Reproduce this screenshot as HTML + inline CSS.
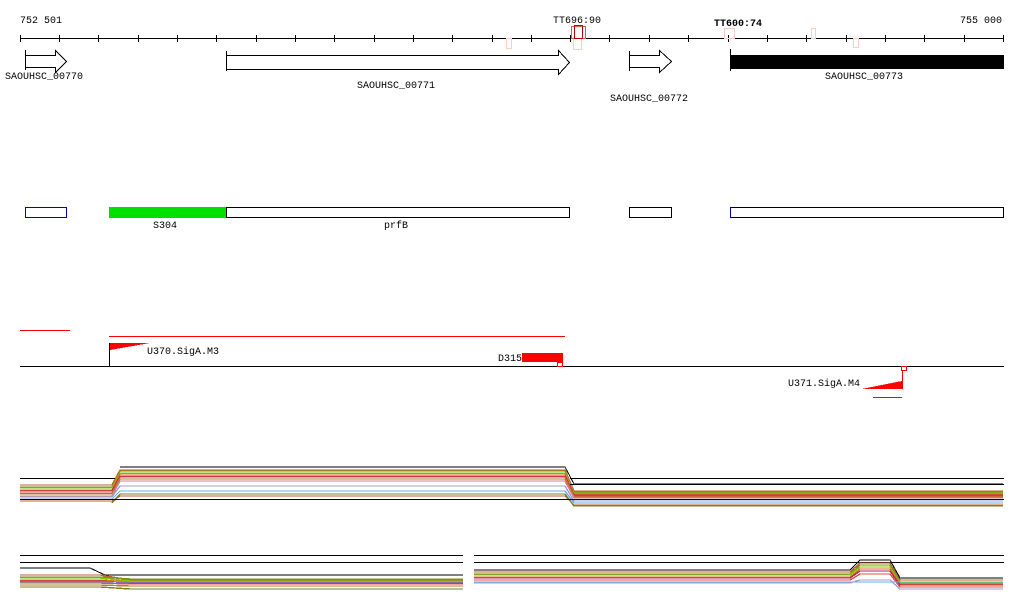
<!DOCTYPE html><html><head><style>body{margin:0;background:#fff}svg{display:block}text{font-family:"Liberation Mono",monospace;font-size:10px}</style></head><body>
<svg width="1024" height="611" xmlns="http://www.w3.org/2000/svg" shape-rendering="crispEdges">
<rect width="1024" height="611" fill="#fff"/>
<text x="20" y="23">752 501</text><text x="960" y="23">755 000</text>
<text x="553" y="23">TT696:90</text><text x="714" y="26" font-weight="bold">TT600:74</text>
<line x1="20" y1="38.5" x2="1003" y2="38.5" stroke="#000"/>
<g stroke="#000">
<path d="M20.5 35v7M59.5 35v7M98.5 35v7M138.5 35v7M177.5 35v7M216.5 35v7M256.5 35v7M295.5 35v7M334.5 35v7M374.5 35v7M413.5 35v7M452.5 35v7M492.5 35v7M531.5 35v7M570.5 35v7M609.5 35v7M649.5 35v7M688.5 35v7M728.5 35v7M767.5 35v7M806.5 35v7M846.5 35v7M885.5 35v7M924.5 35v7M964.5 35v7M1003.5 35v7"/></g>
<g fill="none" stroke="#f8d0c0"><rect x="506.5" y="38.5" width="5" height="10"/><rect x="573.5" y="38.5" width="8" height="11"/><rect x="724.5" y="28.5" width="10" height="10"/><rect x="811.5" y="28.5" width="4" height="10"/><rect x="853.5" y="38.5" width="5" height="9"/></g>
<rect x="571.5" y="26.5" width="14" height="12" fill="none" stroke="#e06040"/><rect x="574.5" y="25.5" width="8" height="13" fill="none" stroke="#c00000"/>
<g fill="#fff" stroke="#000">
<path d="M25.5 55.5h30v-5l11 11-11 11v-5h-30z"/>
<path d="M25.5 50v20M226.5 51v20M629.5 51v20M730.5 49v22"/>
<path d="M226.5 55.5h332v-5l11 12-11 12v-5h-332z"/>
<path d="M629.5 55.5h30v-5l12 11-12 11v-5h-30z"/>
</g>
<rect x="730" y="55" width="274" height="14" fill="#000"/>
<text x="5" y="79">SAOUHSC_00770</text><text x="357" y="88">SAOUHSC_00771</text><text x="610" y="101">SAOUHSC_00772</text><text x="825" y="79">SAOUHSC_00773</text>
<rect x="25.5" y="207.5" width="41" height="10" fill="none" stroke="#0000c0"/>
<rect x="109" y="207" width="117" height="11" fill="#00e000"/>
<rect x="226.5" y="207.5" width="343" height="10" fill="none" stroke="#000"/>
<rect x="629.5" y="207.5" width="42" height="10" fill="none" stroke="#000"/>
<rect x="730.5" y="207.5" width="273" height="10" fill="none" stroke="#000"/><line x1="730.5" y1="207" x2="730.5" y2="218" stroke="#0000c0"/>
<text x="153" y="228">S304</text><text x="384" y="228">prfB</text>
<line x1="20" y1="330.5" x2="70" y2="330.5" stroke="red"/>
<line x1="109" y1="336.5" x2="565" y2="336.5" stroke="red"/>
<line x1="20" y1="366.5" x2="1004" y2="366.5" stroke="#000"/>
<line x1="109.5" y1="343" x2="109.5" y2="366" stroke="#000"/>
<path d="M110 343h40l-40 7z" fill="red"/>
<text x="147" y="354">U370.SigA.M3</text>
<text x="498" y="361">D315</text><rect x="522" y="353" width="41" height="9" fill="red"/>
<rect x="557.5" y="362.5" width="5" height="4" fill="none" stroke="red"/>
<path d="M862 389l40-8v8z" fill="red"/><line x1="902.5" y1="371" x2="902.5" y2="389" stroke="red"/><rect x="901.5" y="366.5" width="5" height="4" fill="none" stroke="red"/>
<line x1="873" y1="397.5" x2="902" y2="397.5" stroke="red"/>
<text x="788" y="386">U371.SigA.M4</text>
<g fill="none" stroke-width="1.4">
<g id="tb">
<path stroke="#c06030" d="M20 485H112L120 470H565L574 491H1003"/>
<path stroke="#8a8a20" d="M20 487H112L120 471H565L574 492H1003"/>
<path stroke="#70d000" d="M20 488H112L120 473H565L574 493H1003"/>
<path stroke="#e07020" d="M20 490H112L120 474H565L574 494H1003"/>
<path stroke="#c02060" d="M20 491H112L120 476H565L574 495H1003"/>
<path stroke="#e05040" d="M20 493H112L120 477H565L574 496H1003"/>
<path stroke="#b08030" d="M20 494H112L120 479H565L574 497H1003"/>
<path stroke="#d08090" d="M20 496H112L120 481H565L574 498H1003"/>
<path stroke="#a0a0d0" d="M20 497H112L120 486H565L574 501H1003"/>
<path stroke="#60b0f0" d="M20 499H112L120 491H565L574 503H1003"/>
<path stroke="#c06030" d="M20 501H112L120 496H565L574 505H1003"/>
<path stroke="#808020" d="M112 503L120 494H565L574 506H1003"/>
</g>
<path stroke="#000" d="M120 467H565L574 484H1003" stroke-width="1"/>
</g>
<g stroke="#000"><line x1="20" y1="478.5" x2="115" y2="478.5"/><line x1="570" y1="478.5" x2="1004" y2="478.5"/><line x1="570" y1="484.5" x2="1004" y2="484.5"/><line x1="20" y1="499.5" x2="1004" y2="499.5"/>
<line x1="20" y1="555.5" x2="463" y2="555.5"/><line x1="20" y1="562.5" x2="463" y2="562.5"/><line x1="474" y1="555.5" x2="1004" y2="555.5"/><line x1="474" y1="562.5" x2="1004" y2="562.5"/></g>
<g fill="none" stroke-width="1.4">
<path stroke="#000" stroke-width="1" d="M20 568H90L105 575H463"/>
<path stroke="#c06030" d="M20 575H100L130 580H463"/>
<path stroke="#8a8a20" d="M20 577H100L130 579H463"/>
<path stroke="#70d000" d="M20 578H100L130 581H463"/>
<path stroke="#e07020" d="M20 580H100L130 582H463"/>
<path stroke="#c02060" d="M20 581H100L130 583H463"/>
<path stroke="#e05040" d="M20 583H100L130 584H463"/>
<path stroke="#b08030" d="M20 585H100L130 586H463"/>
<path stroke="#60b0f0" d="M20 582H463"/>
<path stroke="#808020" d="M20 587H100L130 589H463"/>
<path stroke="#c06030" d="M474 572H850L860 563H890L900 580H1003"/>
<path stroke="#8a8a20" d="M474 574H850L860 565H890L900 582H1003"/>
<path stroke="#70d000" d="M474 575H850L860 567H890L900 583H1003"/>
<path stroke="#e07020" d="M474 577H850L860 569H890L900 584H1003"/>
<path stroke="#c02060" d="M474 578H850L860 571H890L900 585H1003"/>
<path stroke="#e05040" d="M474 580H850L860 574H890L900 587H1003"/>
<path stroke="#60b0f0" d="M474 582H1003"/>
<path stroke="#a0a0d0" d="M474 583H850L860 580H890L900 589H1003"/>
<path stroke="#000" stroke-width="1" d="M474 570H850L860 560H890L900 578H1003"/>
</g>
</svg></body></html>
